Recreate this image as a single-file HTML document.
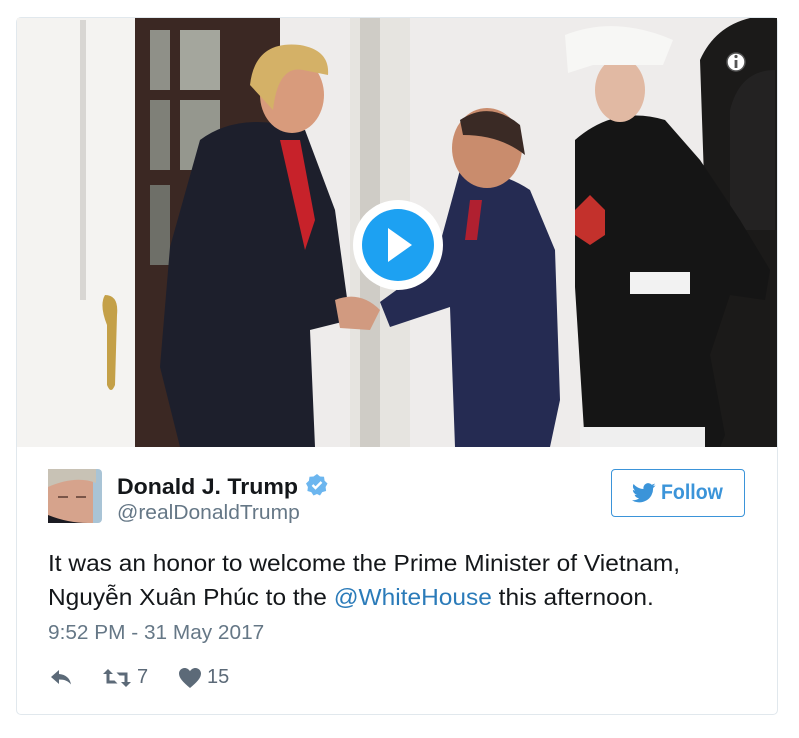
<!DOCTYPE html>
<html><head><meta charset="utf-8"><style>
body{margin:0;width:799px;height:738px;background:#fff;font-family:"Liberation Sans","Noto Sans CJK SC",sans-serif;position:relative;overflow:hidden}
.card{position:absolute;left:16px;top:17px;width:760px;height:696px;border:1px solid #e1e8ed;border-radius:5px}
.t{position:absolute;white-space:nowrap;transform-origin:0 0}
</style></head><body>
<div class="card"></div>
<svg style="position:absolute;left:17px;top:18px" width="760" height="429" viewBox="17 18 760 429">
<rect x="17" y="18" width="760" height="429" fill="#eeeceb"/>
<rect x="17" y="18" width="120" height="429" fill="#f4f3f1"/>
<rect x="80" y="20" width="6" height="280" fill="#d8d6d3"/>
<rect x="135" y="18" width="145" height="429" fill="#3b2823"/>
<rect x="150" y="30" width="20" height="60" fill="#8f9088"/><rect x="180" y="30" width="40" height="60" fill="#a4a69d"/>
<rect x="150" y="100" width="20" height="70" fill="#7f8078"/><rect x="180" y="100" width="40" height="70" fill="#95978e"/>
<rect x="150" y="185" width="20" height="80" fill="#6e6f68"/>
<rect x="350" y="18" width="60" height="429" fill="#e6e4e0"/>
<rect x="360" y="18" width="20" height="429" fill="#cfccc6"/>
<path d="M105 295 q14 0 12 20 l-2 70 q-4 10 -8 0 l0 -60 q-8 -20 -2 -30z" fill="#c4a048"/>
<path d="M700 60 q20 -45 77 -45 v432 h-80 l10 -180z" fill="#1b1a19"/>
<path d="M730 110 q10 -40 45 -40 v160 h-45z" fill="#232222"/>
<path d="M200 140 q40 -30 105 -10 l30 80 l15 110 l-40 10 l5 117 h-135 l-20 -80 l10 -120z" fill="#1d1f2c"/>
<path d="M280 140 l20 0 l15 80 l-10 30z" fill="#c7222a"/>
<ellipse cx="292" cy="95" rx="32" ry="38" fill="#d89b7c"/>
<path d="M250 85 q5 -45 50 -40 q30 5 28 30 l-25 -5 q-25 -5 -30 40z" fill="#d4b167"/>
<path d="M335 300 q25 -10 45 10 l-10 20 l-30 -2z" fill="#d19a80"/>
<path d="M460 170 q40 0 70 20 l25 60 l5 150 l-10 47 h-95 l-5 -140 l-60 20 l-10 -25 l55 -40z" fill="#252b52"/>
<path d="M470 200 l12 0 l-5 40 l-12 0z" fill="#b02030"/>
<ellipse cx="487" cy="148" rx="35" ry="40" fill="#c98c6d"/>
<path d="M460 120 q30 -20 60 5 l5 30 q-25 -20 -62 -20z" fill="#3a2a25"/>
<path d="M575 140 q40 -35 90 -20 l35 40 l40 60 l30 50 l-5 30 l-35 -5 l-20 60 l15 80 l-5 12 h-135 l-10 -160z" fill="#151515"/>
<rect x="630" y="272" width="60" height="22" fill="#f2f2f2"/>
<rect x="580" y="427" width="125" height="20" fill="#efefef"/>
<path d="M575 210 l15 -15 l15 15 l0 25 l-15 10 l-15 -10z" fill="#c3312c"/>
<ellipse cx="620" cy="90" rx="25" ry="32" fill="#e1b9a3"/>
<path d="M565 35 q50 -20 108 5 l-10 25 l-70 0 l-25 8 z" fill="#f7f7f5"/>
<circle cx="398" cy="245" r="45" fill="#fff"/>
<circle cx="398" cy="245" r="36" fill="#1da1f2"/>
<path d="M388 228 l24 17 l-24 17z" fill="#fff"/>
<circle cx="736" cy="62" r="9" fill="#fff" stroke="#555" stroke-width="1.5"/>
<rect x="734.6" y="60" width="2.8" height="8" fill="#555"/><circle cx="736" cy="56.5" r="1.6" fill="#555"/>
</svg>
<svg style="position:absolute;left:48px;top:469px" width="54" height="54" viewBox="0 0 54 54">
<rect width="54" height="54" rx="4" fill="#a9c4d6"/>
<rect x="0" y="0" width="45" height="54" fill="#d6a38c"/>
<path d="M0 0 h48 v14 q-20 -8 -48 4z" fill="#c8c2b5"/>
<path d="M0 46 q20 8 40 8 h-40z" fill="#1b1b22"/>
<path d="M10 28 h10 M28 28 h10" stroke="#7a5548" stroke-width="2"/>
</svg>
<div class="t" style="left:117px;top:474px;font-size:22px;font-weight:bold;color:#14171a;transform:scaleX(1.05)">Donald J. Trump</div>
<svg style="position:absolute;left:305px;top:473px" width="24" height="24" viewBox="0 0 24 24"><path d="M12 1l3 2.5 4 .3.6 3.9 2.9 2.8-1.9 3.5.5 4-3.9 1.1-2.2 3.4L12 21l-3.5 1.5-2.2-3.4-3.9-1.1.5-4L1 10.5l2.9-2.8.6-3.9 4-.3z" fill="#6cb6ef"/><path d="M7.5 12l3 3 6-6" stroke="#fff" stroke-width="2.4" fill="none"/></svg>
<div class="t" style="left:117px;top:502px;font-size:20px;color:#657786;transform:scaleX(1.05)">@realDonaldTrump</div>
<div style="position:absolute;left:611px;top:469px;width:132px;height:46px;border:1.5px solid #3b94d9;border-radius:4px"></div>
<svg style="position:absolute;left:632px;top:483px" width="24" height="20" viewBox="0 0 24 20"><path d="M23.5 2.4c-.9.4-1.8.6-2.8.8 1-.6 1.8-1.5 2.1-2.7-.9.6-2 1-3.1 1.2A4.8 4.8 0 0 0 11.5 6 13.8 13.8 0 0 1 1.6 1c-1.3 2.2-.6 5 1.5 6.5-.8 0-1.5-.2-2.200-.6 0 2.3 1.7 4.3 3.9 4.8-.7.2-1.5.2-2.2.1.6 2 2.4 3.3 4.5 3.4A9.7 9.7 0 0 1 0 17.2 13.7 13.7 0 0 0 21.1 5c.9-.7 1.8-1.6 2.4-2.6z" fill="#3b94d9"/></svg>
<div class="t" style="left:661px;top:481px;font-size:21px;font-weight:bold;color:#3b94d9;transform:scaleX(0.93)">Follow</div>
<div class="t" style="left:48px;top:550px;font-size:23px;color:#14171a;transform:scaleX(1.064)">It was an honor to welcome the Prime Minister of Vietnam,</div>
<div class="t" style="left:48px;top:584px;font-size:23px;color:#14171a;transform:scaleX(1.064)">Nguyễn Xuân Phúc to the <span style="color:#2b7bb9">@WhiteHouse</span> this afternoon.</div>
<div class="t" style="left:48px;top:622px;font-size:20px;color:#657786;transform:scaleX(1.04)">9:52 PM - 31 May 2017</div>
<svg style="position:absolute;left:50px;top:668px" width="24" height="20" viewBox="0 0 24 20"><path d="M9 2L1 9l8 7v-4.5c6 0 9 1.5 12 5-1-6-5-10-12-10.5z" fill="#5c6a78"/></svg>
<svg style="position:absolute;left:102px;top:667px" width="30" height="22" viewBox="0 0 30 22"><path d="M6 2l-5 5h3.5v9.5h11l-3-3h-5v-6.5h3.5zM24 20l5-5h-3.5v-9.5h-11l3 3h5v6.5h-3.5z" fill="#5c6a78"/></svg>
<div class="t" style="left:137px;top:666px;font-size:20px;color:#5c6a78">7</div>
<svg style="position:absolute;left:178px;top:667px" width="24" height="22" viewBox="0 0 24 22"><path d="M12 21C5 15 1 11 1 6.5 1 3.5 3.5 1 6.5 1c2.3 0 4.3 1.3 5.5 3.2C13.2 2.3 15.2 1 17.5 1 20.5 1 23 3.5 23 6.5 23 11 19 15 12 21z" fill="#5c6a78"/></svg>
<div class="t" style="left:207px;top:666px;font-size:20px;color:#5c6a78">15</div>
</body></html>
